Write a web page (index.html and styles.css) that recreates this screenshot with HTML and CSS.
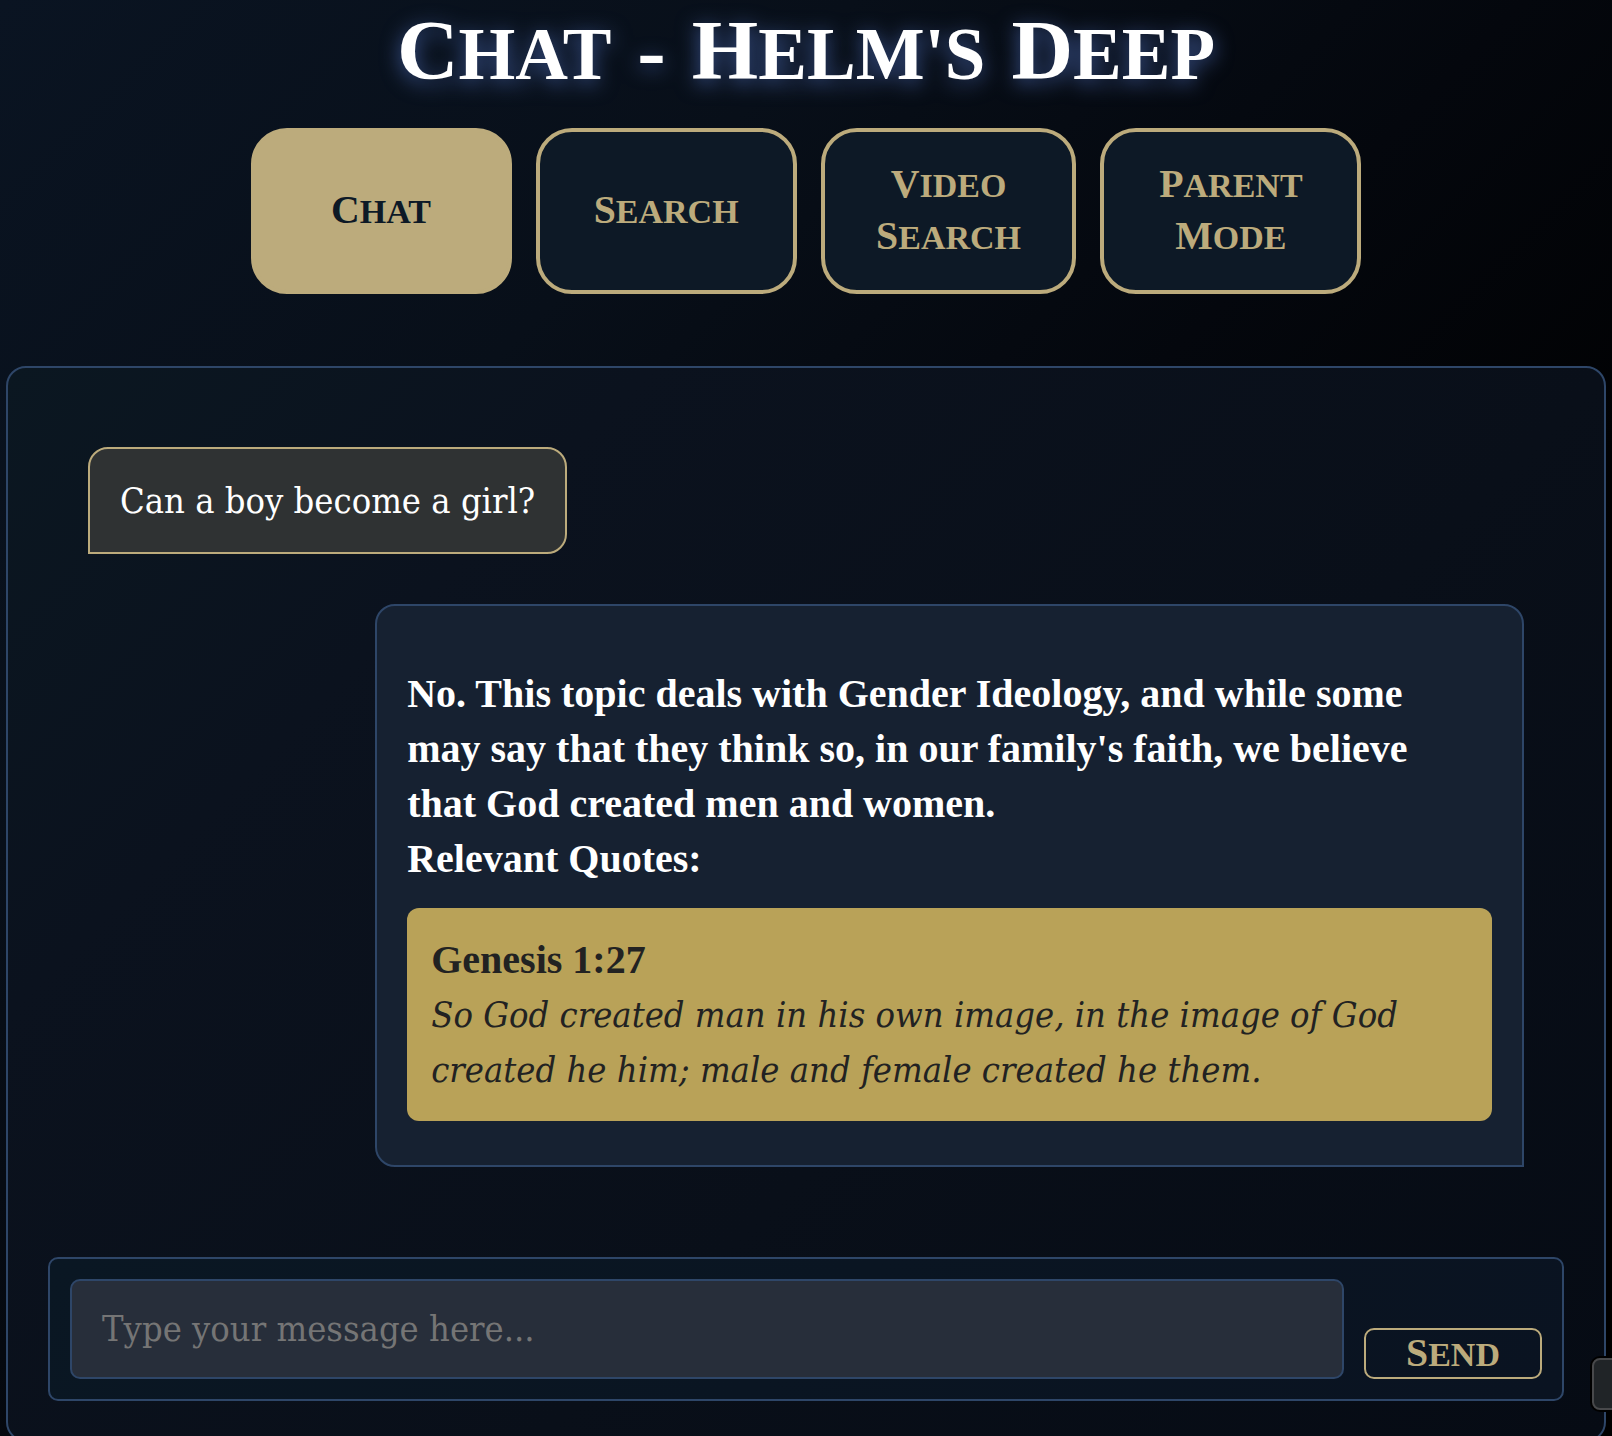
FILE: index.html
```html
<!DOCTYPE html>
<html lang="en">
<head>
<meta charset="utf-8">
<meta name="viewport" content="width=device-width, initial-scale=1">
<title>Chat - Helm's Deep</title>
<link rel="stylesheet" href="styles.css">
</head>
<body>
<header class="header">
  <h1 class="title"><span class="cap">Chat</span> <span class="cap">-</span> <span class="cap">Helm's</span> <span class="cap">Deep</span></h1>
  <nav class="tabs">
    <button class="tab tab-active" type="button"><span class="cap">Chat</span></button>
    <button class="tab" type="button"><span class="cap">Search</span></button>
    <button class="tab tab-narrow" type="button"><span class="cap">Video</span> <span class="cap">Search</span></button>
    <button class="tab" type="button"><span class="cap">Parent</span> <span class="cap">Mode</span></button>
  </nav>
</header>
<main class="panel">
  <section class="messages">
    <div class="bubble bubble-user">Can a boy become a girl?</div>
    <div class="bubble bubble-reply">
      <p class="answer">No. This topic deals with Gender Ideology, and while some may say that they think so, in our family's faith, we believe that God created men and women.<br>Relevant Quotes:</p>
      <blockquote class="quote">
        <strong class="quote-source">Genesis 1:27</strong>
        <em class="quote-text">So God created man in his own image, in the image of God created he him; male and female created he them.</em>
      </blockquote>
    </div>
  </section>
  <form class="composer">
    <textarea class="message-box" rows="1" aria-label="Message" placeholder="Type your message here..."></textarea>
    <button class="send" type="button"><span class="cap">Send</span></button>
  </form>
</main>
<button class="drawer" type="button" aria-label="Open drawer"></button>
</body>
</html>
```
FILE: styles.css
```css
:root {
  --gold: #bcab7c;
  --line: #2e4668;
  --navy: #0d1926;
  --body-font: "DejaVu Serif Condensed", "DejaVu Serif", serif;
  --bold-font: "Liberation Serif", serif;
  --display-font: "Liberation Serif", serif;
}

* {
  box-sizing: border-box;
}

body {
  margin: 0;
  height: 100vh;
  overflow: hidden;
  background: linear-gradient(135deg, #0a1422 0%, #080f19 28%, #04070d 50%, #000000 75%);
  color: #ffffff;
  font: 36px/55px var(--body-font);
}

/* Titling caps: every letter is a capital, the initial slightly taller */
.cap {
  display: inline-block;
  text-transform: uppercase;
}

.cap::first-letter {
  font-size: 117%;
}

.title {
  display: flex;
  justify-content: center;
  gap: 26px;
  margin: 0;
  padding-top: 2px;
  font: bold 73px/96px var(--display-font);
  filter: drop-shadow(0 4px 10px #3c5590);
}

.tabs {
  display: flex;
  gap: 24px;
  max-width: 1111px;
  margin: 25px auto 0;
}

.tab {
  flex: 262 1 0;
  min-height: 166px;
  padding: 0 48px;
  border: 4px solid var(--gold);
  border-radius: 36px;
  background: var(--navy);
  color: var(--gold);
  font: bold 34px/51px var(--display-font);
}

.tab-narrow {
  flex-grow: 253;
}

.tab-active {
  background: var(--gold);
  color: var(--navy);
}

.panel {
  margin: 72px 6px 0;
  padding: 39px 40px;
  border: 2px solid var(--line);
  border-radius: 20px;
  background: linear-gradient(135deg, #0b1721 0%, #0b121e 24%, #090f19 60%, #060b14 100%);
}

.messages {
  display: flex;
  flex-direction: column;
  gap: 50px;
  padding: 40px 40px 90px;
}

.bubble {
  padding: 24px 30px;
  border: 2px solid;
  border-radius: 20px;
}

.bubble-user {
  align-self: flex-start;
  border-color: var(--gold);
  border-bottom-left-radius: 0;
  background: #2f3233;
}

.bubble-reply {
  align-self: flex-end;
  width: 80%;
  padding-bottom: 44px;
  border-color: var(--line);
  border-bottom-right-radius: 0;
  background: #162131;
}

.answer {
  margin: 36px 0 22px;
  padding-right: 24px;
  font: bold 40px/55px var(--bold-font);
}

.quote {
  margin: 0;
  padding: 24px;
  border-radius: 12px;
  background: #b9a258;
  color: #222222;
}

.quote-source {
  display: block;
  font: bold 40px/55px var(--bold-font);
}

.quote-text {
  display: block;
}

.composer {
  display: flex;
  align-items: flex-end;
  gap: 20px;
  padding: 20px;
  border: 2px solid var(--line);
  border-radius: 10px;
  background: linear-gradient(135deg, #0a1723, #0a1321);
}

.message-box {
  flex: 1;
  min-width: 0;
  height: 100px;
  padding: 20px 30px;
  border: 2px solid var(--line);
  border-radius: 10px;
  background: #272e3a;
  color: #ffffff;
  font: inherit;
  resize: none;
}

.message-box::placeholder {
  color: #757575;
}

.send {
  width: 178px;
  height: 51px;
  padding: 0;
  border: 2px solid var(--gold);
  border-radius: 10px;
  background: transparent;
  color: var(--gold);
  font: bold 34px/46px var(--display-font);
}

.drawer {
  position: fixed;
  right: -20px;
  bottom: 26px;
  width: 40px;
  height: 52px;
  border: 2px solid #48494b;
  border-radius: 8px;
  background: #202427;
  box-shadow: 0 0 0 2px #000000;
}
```
